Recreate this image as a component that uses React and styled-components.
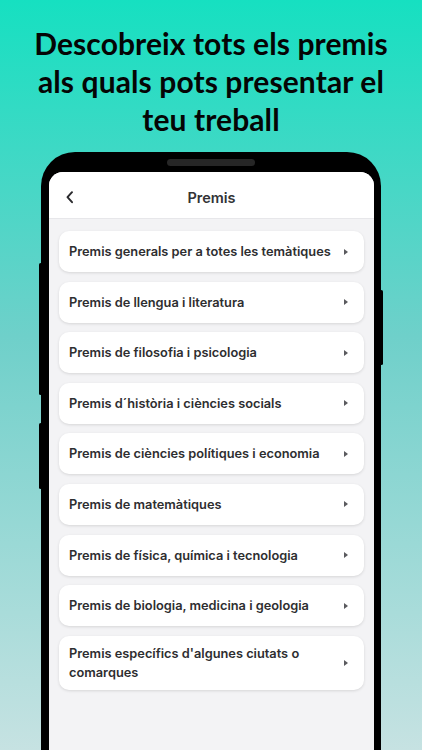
import React from "react";
import styled, { createGlobalStyle } from "styled-components";

const Global = createGlobalStyle`
  html, body { margin: 0; padding: 0; }
  body { width: 422px; height: 750px; overflow: hidden; }
  * { box-sizing: border-box; }
`;

const Page = styled.div`
  width: 422px;
  height: 750px;
  overflow: hidden;
  background: linear-gradient(180deg, #16e0c1 0%, #6fd0ca 45%, #c6e2e2 100%);
  display: flex;
  flex-direction: column;
  align-items: center;
`;

const Headline = styled.h1`
  margin: 24px 0 0;
  width: 364px;
  text-align: center;
  font-family: Lato, "Liberation Sans", sans-serif;
  font-weight: 700;
  font-size: 30px;
  line-height: 38px;
  color: #050505;
  letter-spacing: 0.1px;
`;

const Phone = styled.div`
  position: relative;
  margin-top: 14px;
  width: 340px;
  flex: 1;
  background: #000;
  border-radius: 34px 34px 0 0;
  padding: 20px 7px 0 8px;
  display: flex;
  flex-direction: column;
`;

const Speaker = styled.div`
  position: absolute;
  top: 7px;
  left: 126px;
  width: 88px;
  height: 7px;
  border-radius: 4px;
  background: #262626;
`;

const SideKey = styled.div`
  position: absolute;
  width: 3px;
  background: #000;
  border-radius: 2px;
  ${(p) => (p.$side === "left" ? "left: -2px;" : "right: -2px;")}
  top: ${(p) => p.$top}px;
  height: ${(p) => p.$h}px;
`;

const Screen = styled.div`
  flex: 1;
  background: #f3f3f5;
  border-radius: 14px 14px 0 0;
  overflow: hidden;
  display: flex;
  flex-direction: column;
`;

const NavBar = styled.div`
  height: 47px;
  padding-top: 5px;
  background: #fff;
  border-bottom: 1px solid #e7e7ea;
  display: flex;
  align-items: center;
  position: relative;
  justify-content: center;
`;

const BackBtn = styled.button`
  position: absolute;
  left: 12px;
  top: 50%;
  transform: translateY(-40%);
  background: none;
  border: none;
  padding: 4px;
  display: flex;
  align-items: center;
  cursor: pointer;
`;

const NavTitle = styled.div`
  font-family: Inter, "Noto Sans", sans-serif;
  font-weight: 600;
  font-size: 14.5px;
  color: #333336;
`;

const List = styled.div`
  padding: 12px 10px 0 10px;
  display: flex;
  flex-direction: column;
  gap: 9.6px;
`;

const Card = styled.div`
  min-height: 41px;
  background: #fff;
  border-radius: 10px;
  box-shadow: 0 1px 3px rgba(0, 0, 0, 0.12);
  display: flex;
  align-items: center;
  justify-content: space-between;
  padding: 8px 16px 8px 10px;
`;

const CardText = styled.div`
  font-family: Inter, "Noto Sans", sans-serif;
  font-weight: 600;
  font-size: 12.8px;
  line-height: 19px;
  color: #2e2e30;
  max-width: 265px;
`;

const Caret = styled.span`
  width: 0;
  height: 0;
  border-top: 3.5px solid transparent;
  border-bottom: 3.5px solid transparent;
  border-left: 4.5px solid #5a5a5e;
  flex-shrink: 0;
`;

const items = [
  "Premis generals per a totes les temàtiques",
  "Premis de llengua i literatura",
  "Premis de filosofia i psicologia",
  "Premis d´història i ciències socials",
  "Premis de ciències polítiques i economia",
  "Premis de matemàtiques",
  "Premis de física, química i tecnologia",
  "Premis de biologia, medicina i geologia",
  "Premis específics d'algunes ciutats o comarques",
];

export default function App() {
  return (
    <>
      <Global />
      <Page>
        <Headline>
          Descobreix tots els premis als quals pots presentar el teu treball
        </Headline>
        <Phone>
          <Speaker />
          <SideKey $side="left" $top={111} $h={132} />
          <SideKey $side="left" $top={271} $h={66} />
          <SideKey $side="right" $top={138} $h={75} />
          <Screen>
            <NavBar>
              <BackBtn aria-label="Enrere">
                <svg width="10" height="14" viewBox="0 0 10 14">
                  <path d="M7 2 L2.5 7 L7 12" fill="none" stroke="#2b2b2e" strokeWidth="2" strokeLinecap="round" strokeLinejoin="round" />
                </svg>
              </BackBtn>
              <NavTitle>Premis</NavTitle>
            </NavBar>
            <List>
              {items.map((t) => (
                <Card key={t}>
                  <CardText>{t}</CardText>
                  <Caret />
                </Card>
              ))}
            </List>
          </Screen>
        </Phone>
      </Page>
    </>
  );
}
